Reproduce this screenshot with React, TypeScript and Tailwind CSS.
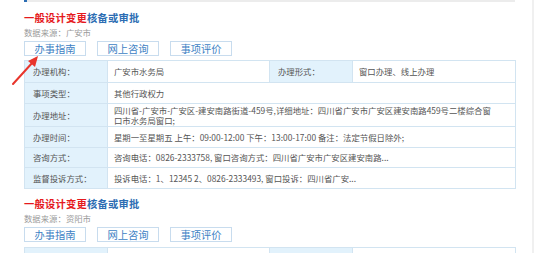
import React from "react";

const FONT = { fontFamily: '"Noto Sans CJK SC", "Noto Sans", sans-serif' };

function Header({ source }: { source: string }) {
  return (
    <>
      <div className="text-[10.3px] leading-[14px] font-bold tracking-[0.2px]">
        <span className="text-[#e5191d]">一般设计变更</span>
        <span className="text-[#2c6db3]">核备或审批</span>
      </div>
      <div className="mt-[1px] text-[8.4px] leading-[12px] text-[#9a9a9a]">数据来源：{source}</div>
      <div className="mt-[3px] flex gap-[11px]">
        {["办事指南", "网上咨询", "事项评价"].map((t) => (
          <div
            key={t}
            className="w-[62px] h-[15px] border border-[#c8dcee] bg-white text-[#3d7fc4] text-[10.3px] leading-[13px] flex items-center justify-center"
          >
            {t}
          </div>
        ))}
      </div>
    </>
  );
}

const lab = "bg-[#e2f2fc] border border-[#d2e4f1] pl-[8px] text-[#555] align-middle";
const val = "bg-white border border-[#d2e4f1] pl-[6px] pr-[6px] text-[#555] align-middle";

export default function App() {
  return (
    <div className="relative w-[546px] h-[253px] overflow-hidden bg-white flex" style={FONT}>
      <div className="w-[515px] pl-[24px] shrink-0">
        <div className="h-[2px] bg-[#ececec] flex">
          <div className="w-[3px] h-full bg-[#2c6db3]" />
        </div>
        <div className="mt-[9px]">
          <Header source="广安市" />
        </div>
        <table className="mt-[4px] w-[491px] border-collapse table-fixed text-[8.4px] leading-[10.5px]">
          <colgroup>
            <col className="w-[83px]" />
            <col className="w-[162px]" />
            <col className="w-[83px]" />
            <col className="w-[163px]" />
          </colgroup>
          <tbody>
            <tr className="h-[22px]">
              <td className={lab}>办理机构：</td>
              <td className={val}>广安市水务局</td>
              <td className={lab}>办理形式：</td>
              <td className={val}>窗口办理、线上办理</td>
            </tr>
            <tr className="h-[21px]">
              <td className={lab}>事项类型：</td>
              <td className={val} colSpan={3}>其他行政权力</td>
            </tr>
            <tr className="h-[23px]">
              <td className={lab}>办理地址：</td>
              <td className={val} colSpan={3}>
                四川省-广安市-广安区-建安南路街道-459号,详细地址：四川省广安市广安区建安南路459号二楼综合窗
                <br />
                口市水务局窗口;
              </td>
            </tr>
            <tr className="h-[21px]">
              <td className={lab}>办理时间：</td>
              <td className={val} colSpan={3}>
                星期一至星期五 上午：09:00-12:00 下午：13:00-17:00 备注：法定节假日除外;
              </td>
            </tr>
            <tr className="h-[20px]">
              <td className={lab}>咨询方式：</td>
              <td className={val} colSpan={3}>
                咨询电话：0826-2333758, 窗口咨询方式：四川省广安市广安区建安南路...
              </td>
            </tr>
            <tr className="h-[21px]">
              <td className={lab}>监督投诉方式：</td>
              <td className={val} colSpan={3}>
                投诉电话：1、12345 2、0826-2333493, 窗口投诉：四川省广安...
              </td>
            </tr>
          </tbody>
        </table>
        <div className="mt-[8px]">
          <Header source="资阳市" />
        </div>
        <table className="mt-[5px] w-[491px] border-collapse table-fixed text-[8.4px] leading-[10.5px]">
          <colgroup>
            <col className="w-[83px]" />
            <col className="w-[162px]" />
            <col className="w-[83px]" />
            <col className="w-[163px]" />
          </colgroup>
          <tbody>
            <tr className="h-[22px]">
              <td className={lab}></td>
              <td className={val}></td>
              <td className={lab}></td>
              <td className={val}></td>
            </tr>
          </tbody>
        </table>
      </div>
      <div className="ml-[17px] w-[2px] h-full bg-[#f0f0f0]" />
      <svg className="absolute left-[8px] top-[52px]" width="36" height="38" viewBox="0 0 36 38">
        <line x1="5" y1="32" x2="25" y2="10" stroke="#e8352c" strokeWidth="2" strokeLinecap="round" />
        <polygon points="30,4 20,9 27,15" fill="#e8352c" />
      </svg>
    </div>
  );
}
